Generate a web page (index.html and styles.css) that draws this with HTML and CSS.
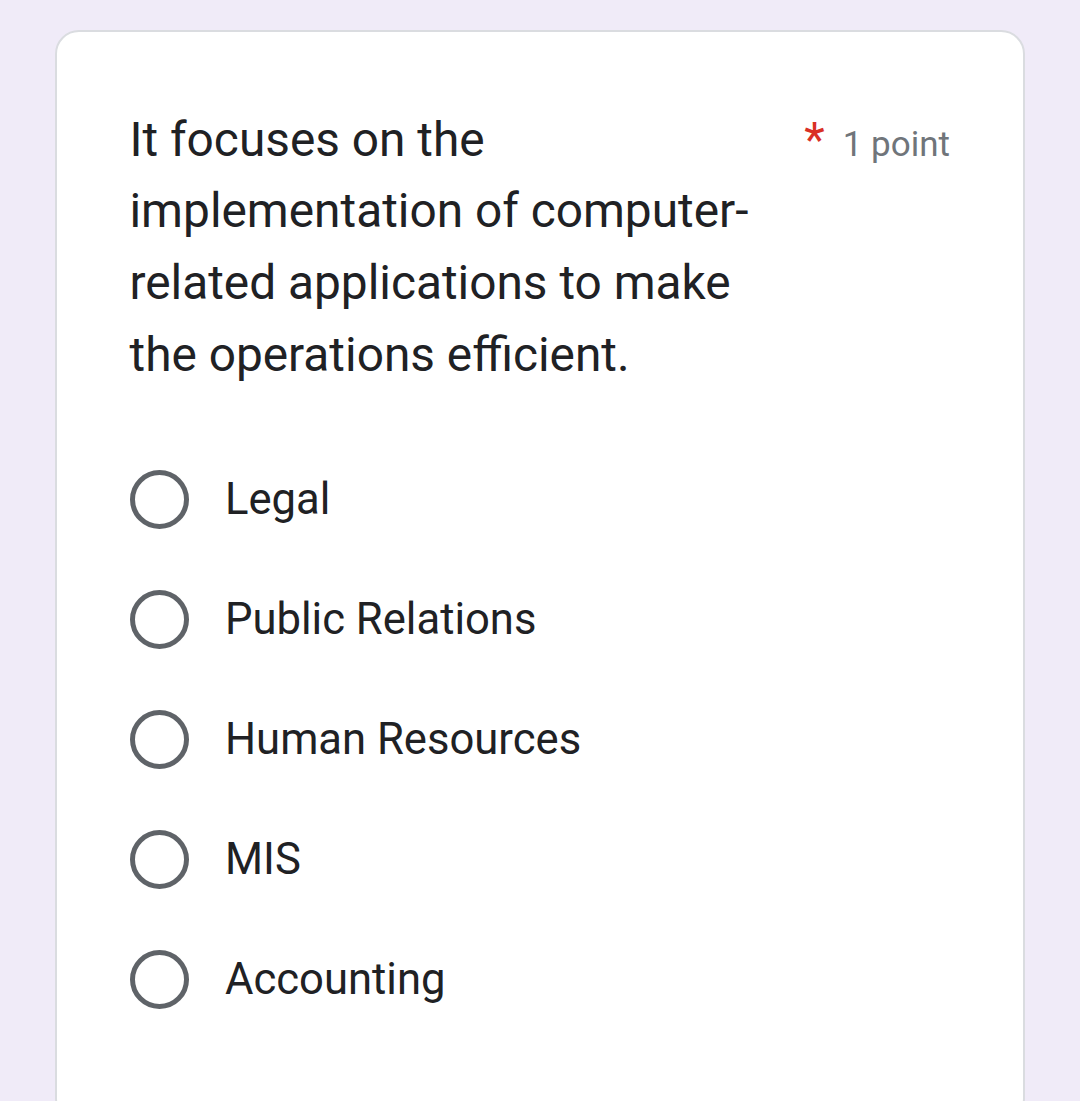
FILE: index.html
```html
<!DOCTYPE html>
<html lang="en">
<head>
<meta charset="utf-8">
<title>Question</title>
<link rel="stylesheet" href="styles.css">
</head>
<body>
  <div class="card">
    <div class="header">
      <div class="title">It focuses on the implementation of computer-related applications to make the operations efficient.</div>
      <span class="required">*</span>
      <span class="points">1 point</span>
    </div>
    <div class="options">
      <div class="option"><span class="radio"></span><span class="label">Legal</span></div>
      <div class="option"><span class="radio"></span><span class="label">Public Relations</span></div>
      <div class="option"><span class="radio"></span><span class="label">Human Resources</span></div>
      <div class="option"><span class="radio"></span><span class="label">MIS</span></div>
      <div class="option"><span class="radio"></span><span class="label">Accounting</span></div>
    </div>
  </div>
</body>
</html>
```
FILE: styles.css
```css
html, body {
  margin: 0;
  padding: 0;
}
body {
  background: #f0ebf8;
  padding: 30px 55px 0 55px;
  font-family: Roboto, "Noto Sans", Arial, sans-serif;
  color: #202124;
  overflow: hidden;
  height: 1101px;
  box-sizing: border-box;
}
.card {
  background: #ffffff;
  border: 2px solid #dadce0;
  border-radius: 24px;
  padding: 72.5px 73px 80px 71px;
}
.header {
  display: flex;
  align-items: baseline;
}
.title {
  flex: 1;
  margin-left: 1.5px;
  padding-right: 40px;
  font-size: 47.8px;
  line-height: 71.7px;
}
.required {
  color: #d93025;
  font-size: 47.5px;
  line-height: 71.7px;
}
.points {
  margin-left: 18px;
  font-size: 35px;
  color: #70757a;
  white-space: nowrap;
}
.options {
  margin-top: 48.6px;
  display: flex;
  flex-direction: column;
}
.option {
  height: 120px;
  display: flex;
  align-items: center;
}
.radio {
  width: 59px;
  height: 59px;
  box-sizing: border-box;
  border: 5.5px solid #5f6368;
  border-radius: 50%;
  margin-left: 1.5px;
  flex: none;
}
.label {
  margin-left: 36.5px;
  font-size: 43.6px;
  line-height: 60px;
}
```
